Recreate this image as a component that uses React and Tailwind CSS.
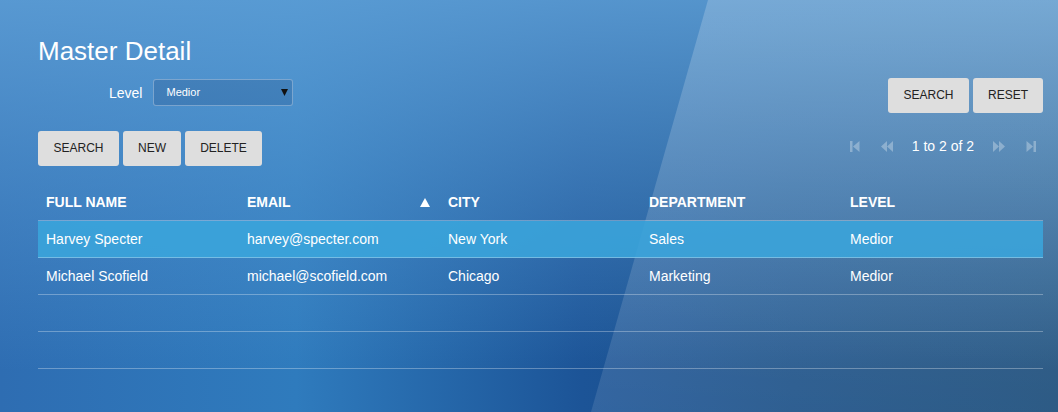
import React from "react";

function IconFirst() {
  return (
    <svg width="10" height="11" viewBox="0 0 10 11" className="block">
      <rect x="0" y="0" width="2.5" height="11" fill="white" />
      <polygon points="9.5,0 9.5,11 3,5.5" fill="white" />
    </svg>
  );
}
function IconPrev() {
  return (
    <svg width="12" height="11" viewBox="0 0 12 11" className="block">
      <polygon points="6,0 6,11 0,5.5" fill="white" />
      <polygon points="12,0 12,11 6,5.5" fill="white" />
    </svg>
  );
}
function IconNext() {
  return (
    <svg width="12" height="11" viewBox="0 0 12 11" className="block">
      <polygon points="0,0 0,11 6,5.5" fill="white" />
      <polygon points="6,0 6,11 12,5.5" fill="white" />
    </svg>
  );
}
function IconLast() {
  return (
    <svg width="10" height="11" viewBox="0 0 10 11" className="block">
      <polygon points="0.5,0 0.5,11 7,5.5" fill="white" />
      <rect x="7.5" y="0" width="2.5" height="11" fill="white" />
    </svg>
  );
}

function Btn({ children, w }) {
  return (
    <button
      className={`h-[35px] ${w} rounded-[3px] bg-[#dedede] pb-px text-[12px] leading-none text-[#222] uppercase`}
    >
      {children}
    </button>
  );
}

const rows = [
  { name: "Harvey Specter", email: "harvey@specter.com", city: "New York", dept: "Sales", level: "Medior", selected: true },
  { name: "Michael Scofield", email: "michael@scofield.com", city: "Chicago", dept: "Marketing", level: "Medior" },
  null,
  null,
];

export default function App() {
  return (
    <div className="relative min-h-[412px] w-full overflow-hidden font-['Liberation_Sans',Arial,sans-serif] text-white bg-[linear-gradient(to_bottom,rgba(95,160,215,0.85)_0%,rgba(90,155,212,0.45)_45%,rgba(90,155,212,0)_90%),linear-gradient(to_right,#2e6db2_0%,#2f7bbd_28%,#1c5497_55%,#174d85_75%,#154877_100%)]">
      <div className="pointer-events-none absolute inset-0 [clip-path:polygon(708px_0,100%_0,100%_100%,591px_100%)] bg-[linear-gradient(to_bottom,rgba(255,255,255,0.2),rgba(255,255,255,0.1))]" />
      <div className="relative pl-[38px] pr-[15px] pt-[36px]">
        <h1 className="text-[26px] leading-[30px] font-normal">Master Detail</h1>

        <div className="mt-[12px] flex items-start justify-between">
          <div className="ml-[71px] mt-px flex h-[27px] items-center gap-[11px]">
            <span className="text-[14px] leading-none">Level</span>
            <div className="flex h-[27px] w-[140px] items-center justify-between rounded-[3px] border border-white/30 bg-[rgba(0,30,80,0.15)] pl-[12px] pr-[4px]">
              <span className="text-[11px] leading-none">Medior</span>
              <svg width="7" height="7" viewBox="0 0 7 7" className="block">
                <polygon points="0,0 7,0 3.5,7" fill="#111" />
              </svg>
            </div>
          </div>
          <div className="flex gap-[4px]">
            <Btn w="w-[81px]">Search</Btn>
            <Btn w="w-[70px]">Reset</Btn>
          </div>
        </div>

        <div className="mt-[18px] flex items-start justify-between">
          <div className="flex gap-[4px]">
            <Btn w="w-[81px]">Search</Btn>
            <Btn w="w-[58px]">New</Btn>
            <Btn w="w-[77px]">Delete</Btn>
          </div>
          <div className="mr-[7px] mt-[5px] flex h-[20px] items-center">
            <span className="opacity-30"><IconFirst /></span>
            <span className="ml-[21px] opacity-30"><IconPrev /></span>
            <span className="ml-[19px] text-[14px] leading-[20px]">1 to 2 of 2</span>
            <span className="ml-[19px] opacity-30"><IconNext /></span>
            <span className="ml-[21px] opacity-30"><IconLast /></span>
          </div>
        </div>

        <div className="mt-[19px] w-[1005px]">
          <div className="grid h-[36px] grid-cols-5 border-b border-white/30 text-[14px] font-bold uppercase">
            <div className="flex items-center pl-[8px]">Full Name</div>
            <div className="flex items-center justify-between pl-[8px] pr-[10px]">
              <span>Email</span>
              <svg width="10" height="9" viewBox="0 0 10 9" className="block">
                <polygon points="5,0 10,9 0,9" fill="white" />
              </svg>
            </div>
            <div className="flex items-center pl-[8px]">City</div>
            <div className="flex items-center pl-[8px]">Department</div>
            <div className="flex items-center pl-[8px]">Level</div>
          </div>
          {rows.map((r, i) => (
            <div
              key={i}
              className={`grid h-[37px] grid-cols-5 border-b border-white/30 text-[14px] ${r && r.selected ? "bg-[rgba(58,165,220,0.88)]" : ""}`}
            >
              {r ? (
                <>
                  <div className="flex items-center pl-[8px]">{r.name}</div>
                  <div className="flex items-center pl-[8px]">{r.email}</div>
                  <div className="flex items-center pl-[8px]">{r.city}</div>
                  <div className="flex items-center pl-[8px]">{r.dept}</div>
                  <div className="flex items-center pl-[8px]">{r.level}</div>
                </>
              ) : null}
            </div>
          ))}
        </div>
      </div>
    </div>
  );
}
